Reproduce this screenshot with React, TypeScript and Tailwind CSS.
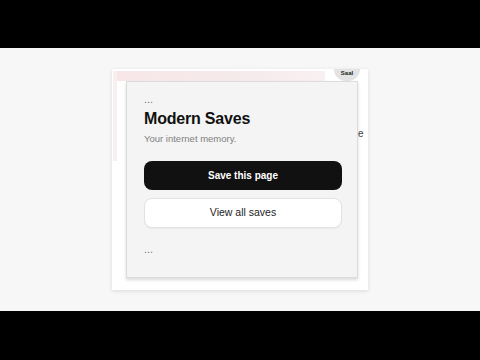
import React from "react";

export default function App() {
  return (
    <div className="w-[480px] h-[360px] flex flex-col bg-black" style={{ fontFamily: '"Liberation Sans", Arial, sans-serif' }}>
      <div className="h-[48px] bg-black" />
      <div className="h-[263px] bg-[#f7f7f7] flex justify-center pt-[21px]">
        <div className="relative w-[256px] h-[221px] bg-white shadow-[0_1px_4px_rgba(0,0,0,0.12)] pl-[14px] pt-[12px]">
          <div className="absolute left-[1px] top-[2px] w-[212px] h-[10px] bg-gradient-to-r from-[#f7e6e8] via-[#f5e9ea] to-[#f9f0f1]" />
          <div className="absolute left-[1px] top-[2px] w-[4px] h-[90px] bg-[#f9eef0]" />
          <div className="absolute left-[222px] top-[0px] w-[26px] h-[12px] rounded-b-full bg-[#e3e3e3] flex justify-center">
            <span className="text-[6px] font-bold text-[#222] leading-[9px]">Saal</span>
          </div>
          <span className="absolute left-[246px] top-[57px] text-[10px] text-[#444]">e</span>
          <div className="relative w-[232px] h-[197px] bg-[#f4f4f4] border border-[#dcdcdc] shadow-[0_2px_3px_rgba(0,0,0,0.15)] pl-[17px] pt-[11px] flex flex-col">
            <div className="text-[11px] leading-[12px] text-[#777]">...</div>
            <div className="mt-[3px] text-[16px] leading-[22px] font-bold text-[#111] tracking-[-0.2px]">Modern Saves</div>
            <div className="mt-[3px] text-[9.5px] leading-[12px] text-[#808080]">Your internet memory.</div>
            <button className="mt-[16px] w-[198px] h-[29px] rounded-[8px] bg-[#111] text-white text-[10px] font-bold">Save this page</button>
            <button className="mt-[8px] w-[198px] h-[30px] rounded-[8px] bg-white border border-[#e2e2e2] text-[#222] text-[10.5px] shadow-[0_1px_1px_rgba(0,0,0,0.04)]">View all saves</button>
            <div className="mt-[15px] text-[11px] leading-[12px] text-[#777]">...</div>
          </div>
        </div>
      </div>
      <div className="flex-1 bg-black" />
    </div>
  );
}
